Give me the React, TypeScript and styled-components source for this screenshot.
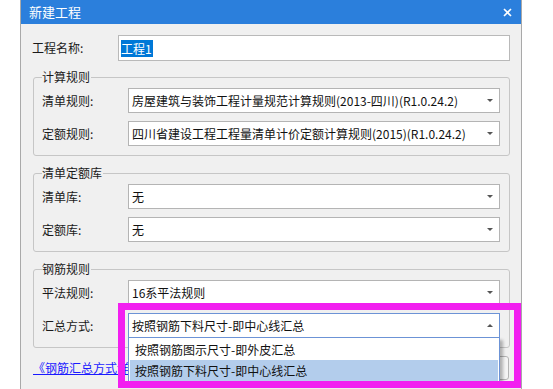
import React from 'react'
import styled, { createGlobalStyle } from 'styled-components'

const GlobalStyle = createGlobalStyle`
  html, body {
    margin: 0;
    padding: 0;
    background: #ffffff;
    overflow: hidden;
  }
  body {
    font-family: "Noto Sans CJK SC", "Microsoft YaHei", "Noto Sans", sans-serif;
    font-size: 12px;
    color: #1a1a1a;
  }
`

type SelectProps = {
  value: string
  open?: boolean
  options?: string[]
  active?: number
}

const Select = ({ value, open, options, active }: SelectProps) => (
  <StyledSelect $open={open}>
    <StyledValue>{value}</StyledValue>
    <StyledArrow $up={open} />
    {open && options && (
      <StyledList>
        {options.map((opt, i) => (
          <StyledOption key={opt} $active={i === active}>
            {opt}
          </StyledOption>
        ))}
      </StyledList>
    )}
  </StyledSelect>
)

const Row = ({ label, children }: { label: string; children: React.ReactNode }) => (
  <StyledRow>
    <StyledLabel>{label}</StyledLabel>
    {children}
  </StyledRow>
)

const App = () => {
  return (
    <StyledPage>
      <GlobalStyle />
      <StyledDialog>
        <StyledTitleBar>
          <StyledTitle>新建工程</StyledTitle>
          <svg width="9" height="9" viewBox="0 0 9 9">
            <path d="M1 1 L8 8 M8 1 L1 8" stroke="#ffffff" strokeWidth="1.6" />
          </svg>
        </StyledTitleBar>

        <StyledBody>
          <StyledNameRow>
            <StyledNameLabel>工程名称:</StyledNameLabel>
            <StyledInput>
              <StyledSelection>工程1</StyledSelection>
            </StyledInput>
          </StyledNameRow>

          <StyledGroup>
            <StyledLegend>计算规则</StyledLegend>
            <StyledRows>
              <Row label="清单规则:">
                <Select value="房屋建筑与装饰工程计量规范计算规则(2013-四川)(R1.0.24.2)" />
              </Row>
              <Row label="定额规则:">
                <Select value="四川省建设工程工程量清单计价定额计算规则(2015)(R1.0.24.2)" />
              </Row>
            </StyledRows>
          </StyledGroup>

          <StyledGroup>
            <StyledLegend>清单定额库</StyledLegend>
            <StyledRows>
              <Row label="清单库:">
                <Select value="无" />
              </Row>
              <Row label="定额库:">
                <Select value="无" />
              </Row>
            </StyledRows>
          </StyledGroup>

          <StyledGroup>
            <StyledLegend>钢筋规则</StyledLegend>
            <StyledRows>
              <Row label="平法规则:">
                <Select value="16系平法规则" />
              </Row>
              <Row label="汇总方式:">
                <Select
                  value="按照钢筋下料尺寸-即中心线汇总"
                  open
                  active={1}
                  options={['按照钢筋图示尺寸-即外皮汇总', '按照钢筋下料尺寸-即中心线汇总']}
                />
              </Row>
            </StyledRows>
          </StyledGroup>

          <StyledFooter>
            <StyledLink href="#">《钢筋汇总方式详解》</StyledLink>
            <StyledButton>确定</StyledButton>
          </StyledFooter>
        </StyledBody>
      </StyledDialog>

      <StyledHighlight />
    </StyledPage>
  )
}

export default App

const StyledPage = styled.div`
  position: relative;
  width: 553px;
  height: 389px;
  padding-left: 20px;
  box-sizing: border-box;
  overflow: hidden;
`

const StyledDialog = styled.div`
  width: 502px;
  height: 389px;
  overflow: hidden;
  background: #f0f0f0;
  border: 1px solid #a9a9a9;
  border-top: none;
  border-bottom: none;
  box-sizing: border-box;
  display: flex;
  flex-direction: column;
`

const StyledTitleBar = styled.div`
  height: 24px;
  flex-shrink: 0;
  margin: 0 -1px;
  padding: 0 10px 0 9px;
  background: #2b7fdc;
  color: #ffffff;

  display: flex;
  align-items: center;
  justify-content: space-between;
`

const StyledTitle = styled.div`
  font-size: 13px;
  line-height: 24px;
`

const StyledBody = styled.div`
  padding: 11px 11px 0 11px;
  display: flex;
  flex-direction: column;
`

const StyledNameRow = styled.div`
  height: 26px;
  display: flex;
  align-items: center;
`

const StyledNameLabel = styled.div`
  width: 86px;
  line-height: 16px;
`

const StyledInput = styled.div`
  flex: 1;
  height: 26px;
  box-sizing: border-box;
  padding-left: 2px;
  background: #ffffff;
  border: 1px solid #b9b9b9;

  display: flex;
  align-items: center;
`

const StyledSelection = styled.span`
  background: #0078d7;
  color: #ffffff;
  line-height: 17px;
  padding-right: 1px;
`

const StyledGroup = styled.fieldset`
  margin: 8px 0 0 1px;
  padding: 3px 9px 9px 8px;
  border: 1px solid #c6c6c6;
  border-radius: 3px;
  min-width: 0;

  & + & {
    margin-top: 9px;
  }
`

const StyledLegend = styled.legend`
  padding: 0 1px 0 0;
  line-height: 16px;
  font-size: 12px;
`

const StyledRows = styled.div`
  display: flex;
  flex-direction: column;
  gap: 8px;
`

const StyledRow = styled.div`
  height: 25px;
  display: flex;
  align-items: center;
`

const StyledLabel = styled.div`
  width: 86px;
  flex-shrink: 0;
  line-height: 16px;
`

const StyledSelect = styled.div<{ $open?: boolean }>`
  position: relative;
  flex: 1;
  height: 25px;
  box-sizing: border-box;
  padding: 0 6px 0 3px;
  background: #ffffff;
  border: 1px solid ${({ $open }) => ($open ? '#6c93d6' : '#b4b4b4')};

  display: flex;
  align-items: center;
  justify-content: space-between;
`

const StyledValue = styled.span`
  line-height: 16px;
  color: #111111;
  white-space: nowrap;
`

const StyledArrow = styled.span<{ $up?: boolean }>`
  width: 0;
  height: 0;
  border-left: 3px solid transparent;
  border-right: 3px solid transparent;
  ${({ $up }) => ($up ? 'border-bottom: 3px solid #555555;' : 'border-top: 3px solid #555555;')}
`

const StyledList = styled.div`
  position: absolute;
  top: 100%;
  left: -1px;
  right: -1px;
  z-index: 2;
  padding: 1px;
  background: #ffffff;
  border: 1px solid #6c93d6;
  box-shadow: 3px 3px 3px rgba(0, 0, 0, 0.28);
`

const StyledOption = styled.div<{ $active?: boolean }>`
  height: 21px;
  padding-left: 5px;
  line-height: 21px;
  color: #111111;
  background: ${({ $active }) => ($active ? '#b3cdec' : 'transparent')};
`

const StyledFooter = styled.div`
  margin-top: 8px;
  height: 24px;
  display: flex;
  align-items: center;
  justify-content: space-between;
`

const StyledLink = styled.a`
  margin-left: 1px;
  color: #1a1aff;
  text-decoration: underline;
  line-height: 16px;
`

const StyledButton = styled.div`
  width: 75px;
  height: 24px;
  box-sizing: border-box;
  margin-right: 1px;
  border: 1px solid #b4b4b4;
  border-radius: 3px;
  background: #f4f4f4;

  display: flex;
  align-items: center;
  justify-content: center;
`

const StyledHighlight = styled.div`
  position: absolute;
  left: 118px;
  top: 303px;
  width: 403px;
  height: 85px;
  box-sizing: border-box;
  border: 7px solid #f21ff0;
  pointer-events: none;
  z-index: 3;
`
